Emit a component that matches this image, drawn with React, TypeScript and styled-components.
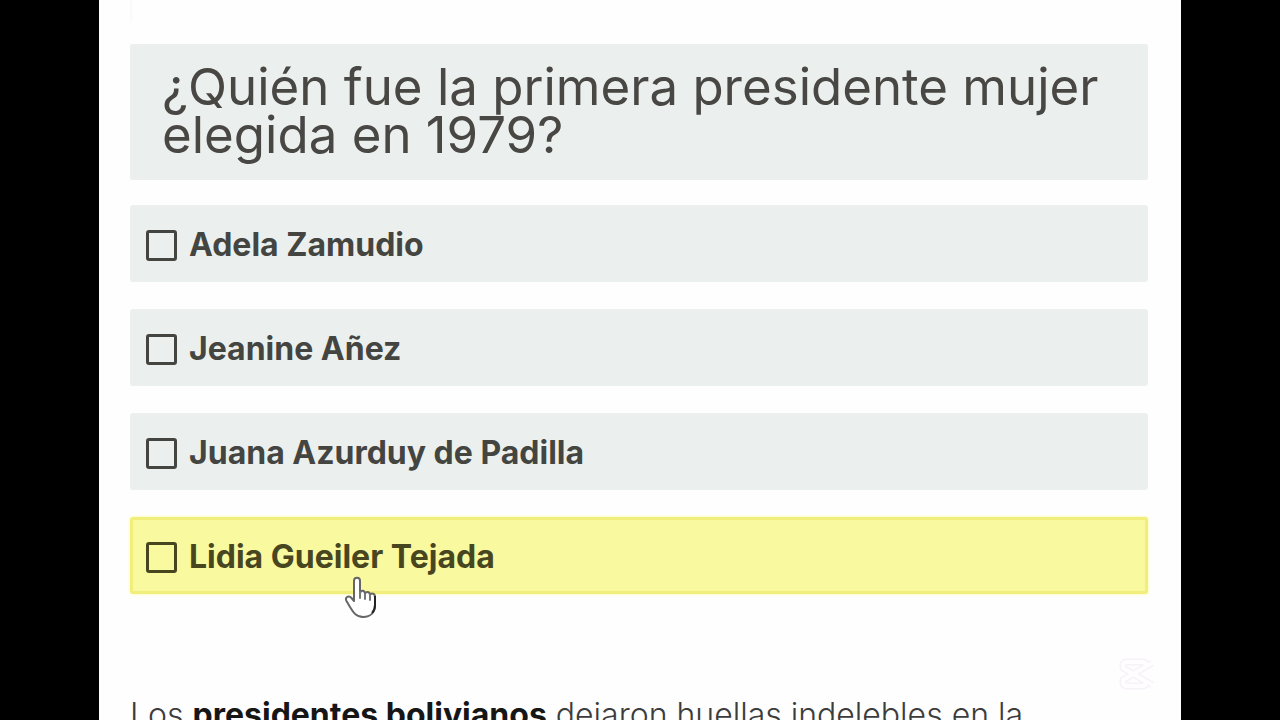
import React, { useState } from "react";
import styled, { createGlobalStyle } from "styled-components";

const GlobalStyle = createGlobalStyle`
  *, *::before, *::after { box-sizing: border-box; }
  body {
    margin: 0;
    background: #000;
    font-family: Inter, "Liberation Sans", sans-serif;
  }
`;

const Stage = styled.div`
  height: 100vh;
  padding: 0 99px;
  overflow: hidden;
  background: #000;
`;

const Page = styled.main`
  position: relative;
  min-height: 100%;
  padding: 0 33px 0 31px;
  background: #fefefe;
`;

const PreviousPanel = styled.div`
  height: 22px;
  margin-bottom: 22px;
  border-left: 2px solid #fafafa;
`;

const Quiz = styled.form`
  margin: 0;
`;

const Question = styled.h1`
  margin: 0 0 25px;
  padding: 19px 32px 21px;
  border-radius: 2px;
  background: #ebf0ef;
  color: #484744;
  font-size: 51px;
  font-weight: 400;
  line-height: 48px;
`;

const Options = styled.div`
  display: flex;
  flex-direction: column;
  gap: 27px;
`;

const Option = styled.label<{ $active: boolean }>`
  display: flex;
  align-items: center;
  gap: 12px;
  min-height: 77px;
  padding: 3px 13px 0;
  border: 3px solid ${(p) => (p.$active ? "#f2ee7c" : "#ebf0ef")};
  border-radius: 3px;
  background: ${(p) => (p.$active ? "#f9f9a0" : "#ebf0ef")};
  box-shadow: ${(p) => (p.$active ? "0 0 3px #fbfb8e" : "none")};
  color: ${(p) => (p.$active ? "#47461f" : "#444541")};
  font-size: 32px;
  font-weight: 700;
  line-height: 40px;
  cursor: pointer;
`;

const Tick = styled.input`
  appearance: none;
  flex: none;
  width: 31px;
  height: 31px;
  margin: 0;
  border: 3px solid currentColor;
  border-radius: 3px;
  color: inherit;
  &:checked {
    background: currentColor;
  }
`;

const Article = styled.p`
  margin: 99px 0 0;
  color: #3c3c3c;
  font-size: 32px;
  font-weight: 300;
  line-height: 44px;
`;

const Strong = styled.strong`
  color: #161616;
  font-weight: 700;
`;

const Pointer = styled.svg`
  position: absolute;
  left: 245px;
  top: 576px;
  width: 34px;
  height: 44px;
  pointer-events: none;
`;

const Watermark = styled.svg`
  position: absolute;
  right: 27px;
  top: 657px;
  width: 38px;
  height: 34px;
`;

const names = ["Adela Zamudio", "Jeanine Añez", "Juana Azurduy de Padilla", "Lidia Gueiler Tejada"];

export default function App() {
  const [active, setActive] = useState(3);
  return (
    <Stage>
      <GlobalStyle />
      <Page>
        <PreviousPanel />
        <Quiz>
          <Question>¿Quién fue la primera presidente mujer elegida en 1979?</Question>
          <Options>
            {names.map((name, i) => (
              <Option key={name} $active={i === active} onMouseEnter={() => setActive(i)}>
                <Tick type="checkbox" name="respuesta" value={name} />
                <span>{name}</span>
              </Option>
            ))}
          </Options>
        </Quiz>
        <Article>
          Los <Strong>presidentes bolivianos</Strong> dejaron huellas indelebles en la
        </Article>
        <Pointer viewBox="0 0 34 44" aria-hidden="true">
          <path
            d="M10 5C10 0.800 16 0.800 16 5V17C17 13.500 21 14 21 18C22 14.800 26 15.500 26 19C27.500 16.500 31 17.500 31 21V29C31 36 27 41 19 41C12 41 9 36 6 31L2.500 25C0.500 21 5 19 7.500 22L10 25Z"
            fill="#fff"
            stroke="#666"
            strokeWidth="2"
            strokeLinejoin="round"
          />
          <path d="M16 16V22M21 18V23M26 19V24" fill="none" stroke="#777" strokeWidth="2" strokeLinecap="round" />
          <path d="M31 20V29C31 32 30 35 28 37" fill="none" stroke="#222" strokeWidth="2" />
        </Pointer>
        <Watermark viewBox="0 0 38 34" fill="none" aria-hidden="true">
          <path
            d="M36 6L7 23V25Q7 29 11 29H26Q30 29 30 25V23M36 28L7 11V9Q7 5 11 5H26Q30 5 30 9V11"
            stroke="#f6f2f7"
            strokeWidth="7"
            strokeLinejoin="round"
          />
          <path
            d="M36 6L7 23V25Q7 29 11 29H26Q30 29 30 25V23M36 28L7 11V9Q7 5 11 5H26Q30 5 30 9V11"
            stroke="#fefefe"
            strokeWidth="4"
            strokeLinejoin="round"
          />
        </Watermark>
      </Page>
    </Stage>
  );
}
